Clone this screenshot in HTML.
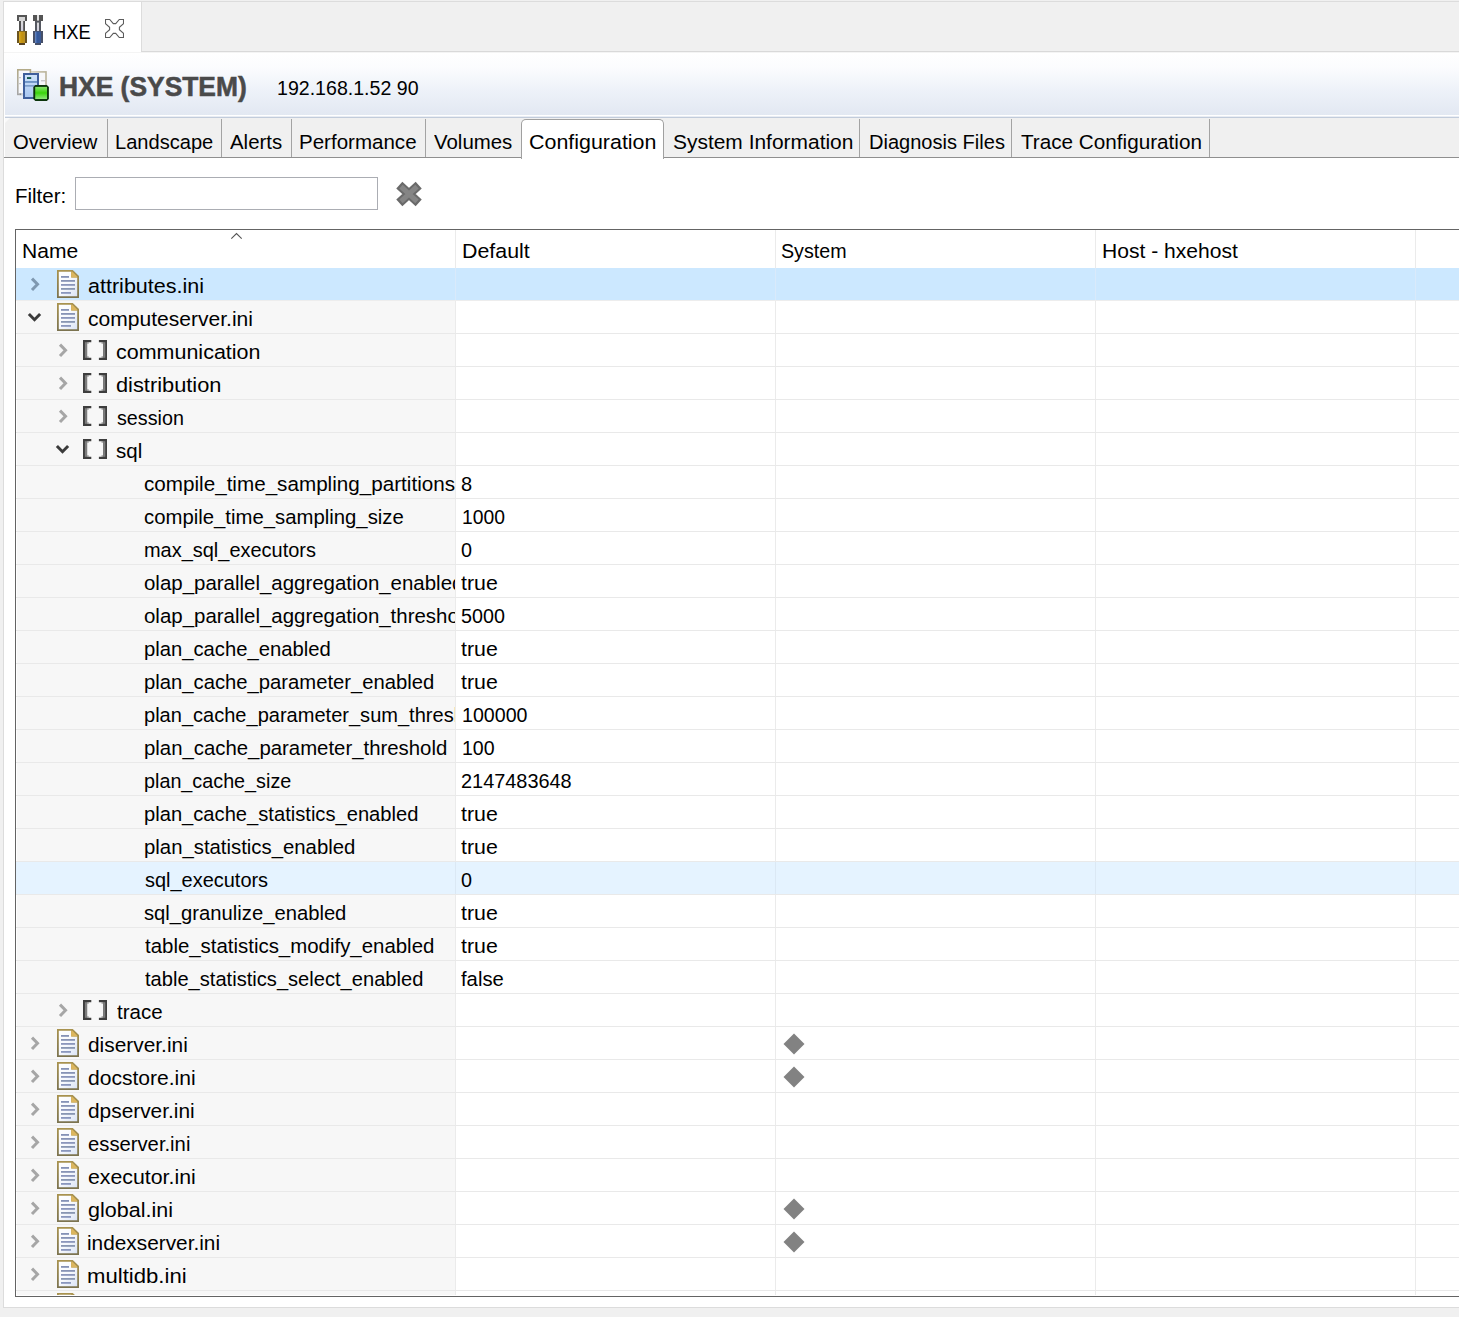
<!DOCTYPE html>
<html><head><meta charset="utf-8"><title>HXE</title>
<style>
html,body{margin:0;padding:0}
body{width:1459px;height:1317px;background:#f0f0f0;overflow:hidden;position:relative;font-family:"Liberation Sans",sans-serif}
.r{position:absolute;display:block}
.clip{overflow:hidden}
.ttl{-webkit-text-stroke:0.55px #4a4a4a}
.t{position:absolute;white-space:nowrap;line-height:1;transform-origin:0 50%;display:inline-block}
</style></head><body>
<div class="r" style="left:3px;top:1px;width:1456px;height:1px;background:#dcdcdc;"></div>
<div class="r" style="left:3px;top:1px;width:1px;height:1307px;background:#dcdcdc;"></div>
<div class="r" style="left:3px;top:1307px;width:1456px;height:1px;background:#dcdcdc;"></div>
<div class="r" style="left:4px;top:2px;width:1455px;height:1305px;background:#fff;"></div>
<div class="r" style="left:4px;top:2px;width:1455px;height:49px;background:#f0f0f0;"></div>
<div class="r" style="left:141px;top:51px;width:1318px;height:1px;background:#d9d9d9;"></div>
<div class="r" style="left:4px;top:2px;width:137px;height:50px;background:#fff;"></div>
<div class="r" style="left:141px;top:2px;width:1px;height:49px;background:#dcdcdc;"></div>
<svg class="r" style="left:17px;top:15px" width="26" height="30" viewBox="0 0 26 30">
<defs><linearGradient id="gy" x1="0" x2="1"><stop offset="0" stop-color="#d9ac2a"/><stop offset=".5" stop-color="#c4910c"/><stop offset="1" stop-color="#b8902a"/></linearGradient>
<linearGradient id="gb" x1="0" x2="1"><stop offset="0" stop-color="#6f8fc8"/><stop offset=".35" stop-color="#33599e"/><stop offset="1" stop-color="#3d5a94"/></linearGradient>
<linearGradient id="gs" x1="0" y1="0" x2="0" y2="1"><stop offset="0" stop-color="#dcdcdc"/><stop offset="1" stop-color="#d2d0e0"/></linearGradient></defs>
<rect x="0" y="0" width="10" height="6" fill="#555"/><rect x="2" y="2" width="6" height="4" fill="#d6d6d6"/>
<rect x="2" y="6" width="6" height="10" fill="#505050"/><rect x="4" y="6" width="2.2" height="10" fill="url(#gs)"/>
<rect x="0" y="16" width="10" height="12" fill="#6a5420"/><rect x="2" y="16.6" width="6" height="11.4" fill="url(#gy)"/>
<rect x="2" y="28" width="6" height="2" fill="#5a4522"/>
<rect x="16" y="0" width="10" height="6" fill="#555"/><rect x="20" y="0" width="2" height="5.6" fill="#e4e4e4"/>
<rect x="18" y="6" width="6" height="10" fill="#555860"/><rect x="20" y="7.6" width="2" height="8.4" fill="url(#gs)"/>
<rect x="16" y="16" width="10" height="12" fill="#475068"/><rect x="18" y="16.6" width="6" height="11.4" fill="url(#gb)"/>
<rect x="18" y="28" width="6" height="2" fill="#45506a"/>
</svg>
<span class="t " style="left:52.64px;top:22px;font-size:20.5px;transform:scaleX(0.8924);color:#000;">HXE</span>
<svg class="r" style="left:105px;top:19px" width="19" height="19" viewBox="0 0 19 19">
<path d="M.5.5H4.7L8.3 4.6H10.7L14.3.5H18.5V4.7L14.4 8.3V10.7L18.5 14.3V18.5H14.3L10.7 14.4H8.3L4.7 18.5H.5V14.3L4.6 10.7V8.3L.5 4.7Z" fill="#fff" stroke="#5c5c5c" stroke-width="1.1"/></svg>
<div class="r" style="left:5px;top:52px;width:1454px;height:63px;background:linear-gradient(#ffffff 0%,#fbfcfe 25%,#eef2f9 60%,#e2e8f2 100%);"></div>
<div class="r" style="left:4px;top:52px;width:1455px;height:1px;background:#f4f4f4;"></div>
<div class="r" style="left:5px;top:115px;width:1454px;height:1px;background:#ffffff;"></div>
<div class="r" style="left:5px;top:116px;width:1454px;height:1px;background:#e9edf4;"></div>
<div class="r" style="left:5px;top:117px;width:1454px;height:1px;background:#c2ccdb;"></div>
<svg class="r" style="left:17px;top:69px" width="32" height="32" viewBox="0 0 32 32">
<defs><linearGradient id="gg" x1="0" y1="0" x2="0" y2="1"><stop offset="0" stop-color="#86e36a"/><stop offset=".5" stop-color="#3ad40c"/><stop offset="1" stop-color="#8ce87a"/></linearGradient>
<linearGradient id="gsv" x1="0" y1="0" x2="0" y2="1"><stop offset="0" stop-color="#cfe4fb"/><stop offset="1" stop-color="#a9c6f0"/></linearGradient></defs>
<defs><linearGradient id="bp1" x1="0" y1="0" x2="0" y2="1"><stop offset="0" stop-color="#b3aa88"/><stop offset=".5" stop-color="#b0ac9c"/><stop offset="1" stop-color="#a6a6a6"/></linearGradient>
<linearGradient id="bp2" x1="0" y1="0" x2="1" y2="0"><stop offset="0" stop-color="#dddacb"/><stop offset=".6" stop-color="#c2bca4"/><stop offset="1" stop-color="#b9b299"/></linearGradient></defs>
<rect x="13" y="2.9" width="16" height="14" fill="#f6f7fa" stroke="url(#bp2)" stroke-width="1.6"/>
<rect x=".8" y=".8" width="12.6" height="24.6" fill="#f7f8fb" stroke="url(#bp1)" stroke-width="1.6"/>
<rect x="2" y="24.2" width="5" height="2" fill="#d9d9d9"/><rect x="2.4" y="24.4" width="1.8" height="1.6" fill="#8c8c8c"/>
<rect x="2" y="8" width="2" height="1.2" fill="#c8c8c8"/><rect x="2" y="14" width="2" height="1.2" fill="#c8c8c8"/><rect x="24" y="11" width="4" height="1.4" fill="#c8c8cc"/>
<rect x="7" y="5" width="14" height="24" fill="url(#gsv)" stroke="#3f5f9c" stroke-width="2"/>
<rect x="10" y="8.1" width="4.2" height="1.9" fill="#14584c"/>
<rect x="8" y="12" width="12" height="1.9" fill="#6f95c6"/>
<rect x="8" y="16" width="12" height="1.7" fill="#7fa0cc"/>
<path d="M18.3 16H29.9L31.9 18V29.9L29.9 31.9H18.3L16.3 29.9V18Z" fill="#0b340b"/>
<rect x="18.2" y="17.9" width="11.8" height="12.1" fill="url(#gg)"/>
</svg>
<span class="t ttl" style="left:59.48px;top:74px;font-size:27.0px;transform:scaleX(0.9778);color:#4a4a4a;font-weight:bold;">HXE (SYSTEM)</span>
<span class="t " style="left:277.43px;top:78px;font-size:20.5px;transform:scaleX(0.9551);color:#000;">192.168.1.52 90</span>
<div class="r" style="left:5px;top:118px;width:1454px;height:39px;background:#f0f0f0;"></div>
<svg class="r" style="left:5px;top:118px" width="6" height="6" viewBox="0 0 6 6"><path d="M0 0H5L0 5Z" fill="#fafafa"/></svg>
<div class="r" style="left:4px;top:157px;width:1455px;height:1px;background:#8f8f8f;"></div>
<div class="r" style="left:107px;top:119px;width:1px;height:38px;background:#a3a3a3;"></div>
<div class="r" style="left:221px;top:119px;width:1px;height:38px;background:#a3a3a3;"></div>
<div class="r" style="left:291px;top:119px;width:1px;height:38px;background:#a3a3a3;"></div>
<div class="r" style="left:425px;top:119px;width:1px;height:38px;background:#a3a3a3;"></div>
<div class="r" style="left:859px;top:119px;width:1px;height:38px;background:#a3a3a3;"></div>
<div class="r" style="left:1011px;top:119px;width:1px;height:38px;background:#a3a3a3;"></div>
<div class="r" style="left:1209px;top:119px;width:1px;height:38px;background:#a3a3a3;"></div>
<div class="r" style="left:521px;top:119px;width:141px;height:39px;background:#fff;border:1px solid #a0a0a0;border-bottom:none;border-radius:5px 5px 0 0;box-sizing:content-box"></div>
<span class="t " style="left:12.69px;top:132px;font-size:20.5px;transform:scaleX(0.9863);color:#000;">Overview</span>
<span class="t " style="left:114.79px;top:132px;font-size:20.5px;transform:scaleX(0.9797);color:#000;">Landscape</span>
<span class="t " style="left:229.90px;top:132px;font-size:20.5px;transform:scaleX(0.9950);color:#000;">Alerts</span>
<span class="t " style="left:298.56px;top:132px;font-size:20.5px;transform:scaleX(1.0017);color:#000;">Performance</span>
<span class="t " style="left:433.70px;top:132px;font-size:20.5px;transform:scaleX(0.9962);color:#000;">Volumes</span>
<span class="t " style="left:528.53px;top:132px;font-size:20.5px;transform:scaleX(1.0450);color:#000;">Configuration</span>
<span class="t " style="left:672.86px;top:132px;font-size:20.5px;transform:scaleX(1.0215);color:#000;">System Information</span>
<span class="t " style="left:868.90px;top:132px;font-size:20.5px;transform:scaleX(0.9778);color:#000;">Diagnosis Files</span>
<span class="t " style="left:1021.39px;top:132px;font-size:20.5px;transform:scaleX(1.0094);color:#000;">Trace Configuration</span>
<span class="t " style="left:14.86px;top:186px;font-size:20.5px;transform:scaleX(0.9986);color:#000;">Filter:</span>
<div class="r" style="left:75px;top:177px;width:301px;height:31px;background:#fff;border:1px solid #abadb3;box-sizing:content-box"></div>
<svg class="r" style="left:394px;top:180px" width="30" height="28" viewBox="0 0 30 28">
<path d="M5.3 5.1L24.7 22.9M24.7 5.1L5.3 22.9" stroke="#6a6a6a" stroke-width="9"/>
<path d="M7 6.7L23 21.3M23 6.7L7 21.3" stroke="#858585" stroke-width="5"/></svg>
<div class="r" style="left:15px;top:229px;width:1444px;height:1px;background:#646464;"></div>
<div class="r" style="left:15px;top:229px;width:1px;height:1068px;background:#646464;"></div>
<div class="r" style="left:15px;top:1296px;width:1444px;height:1px;background:#646464;"></div>
<div class="r" style="left:17px;top:268px;width:438px;height:1027px;background:#f7f7f7;"></div>
<span class="t " style="left:21.82px;top:241px;font-size:20.5px;transform:scaleX(1.0274);color:#000;">Name</span>
<span class="t " style="left:461.79px;top:241px;font-size:20.5px;transform:scaleX(1.0421);color:#000;">Default</span>
<span class="t " style="left:781.42px;top:241px;font-size:20.5px;transform:scaleX(0.9590);color:#000;">System</span>
<span class="t " style="left:1101.71px;top:241px;font-size:20.5px;transform:scaleX(1.0278);color:#000;">Host - hxehost</span>
<svg class="r" style="left:229px;top:231px" width="15" height="9" viewBox="0 0 15 9"><path d="M2.3 7.7L7.5 2.5L12.7 7.7" fill="none" stroke="#555" stroke-width="1.1"/></svg>
<div class="r" style="left:455px;top:230px;width:1px;height:1066px;background:rgba(0,0,0,0.08);"></div>
<div class="r" style="left:775px;top:230px;width:1px;height:1066px;background:rgba(0,0,0,0.08);"></div>
<div class="r" style="left:1095px;top:230px;width:1px;height:1066px;background:rgba(0,0,0,0.08);"></div>
<div class="r" style="left:1415px;top:230px;width:1px;height:1066px;background:rgba(0,0,0,0.08);"></div>
<div class="r" style="left:16px;top:268px;width:1443px;height:32px;background:#cce8ff;"></div>
<div class="r" style="left:455px;top:268px;width:1px;height:32px;background:rgba(255,240,240,0.25);"></div>
<div class="r" style="left:775px;top:268px;width:1px;height:32px;background:rgba(255,240,240,0.25);"></div>
<div class="r" style="left:1095px;top:268px;width:1px;height:32px;background:rgba(255,240,240,0.25);"></div>
<div class="r" style="left:1415px;top:268px;width:1px;height:32px;background:rgba(255,240,240,0.25);"></div>
<div class="r" style="left:16px;top:300px;width:1443px;height:1px;background:#ededed;"></div>
<svg class="r" style="left:28px;top:276px" width="14" height="17" viewBox="0 0 14 17"><path d="M4 2.6L9.5 8.3L4 14" fill="none" stroke="#7f98b0" stroke-width="3"/></svg>
<svg class="r" style="left:57px;top:270px" width="22" height="28" viewBox="0 0 22 28">
<defs><linearGradient id="fb0" x1="0" y1="0" x2="0" y2="1"><stop offset="0" stop-color="#a9934f"/><stop offset="1" stop-color="#7b7350"/></linearGradient>
<linearGradient id="fp0" x1="0" y1="0" x2="1" y2="1"><stop offset="0" stop-color="#ffffff"/><stop offset=".5" stop-color="#f7f9fd"/><stop offset="1" stop-color="#dbe4f5"/></linearGradient></defs>
<path d="M0 0H15.8L22 6V28H0Z" fill="url(#fb0)"/>
<path d="M1.8 1.8H14.2V7.6H20.2V26.2H1.8Z" fill="url(#fp0)"/>
<path d="M14.2 1.8H15.4L20.2 6.4V7.6H14.2Z" fill="#dcb65e"/>
<rect x="4" y="6" width="8" height="1.8" fill="#8592b6"/><rect x="4" y="10" width="14" height="1.8" fill="#8793b5"/>
<rect x="4" y="14" width="14" height="1.8" fill="#8b96bb"/><rect x="4" y="18" width="14" height="1.8" fill="#8896b2"/>
<rect x="4" y="22" width="10" height="1.8" fill="#8a97bd"/></svg>
<span class="t " style="left:87.74px;top:276px;font-size:20.5px;transform:scaleX(1.0504);color:#000;">attributes.ini</span>
<div class="r" style="left:16px;top:333px;width:1443px;height:1px;background:#e9e9e9;"></div>
<svg class="r" style="left:26px;top:310px" width="17" height="14" viewBox="0 0 17 14"><path d="M2.9 4L8.5 9.7L14.1 4" fill="none" stroke="#3b3b3b" stroke-width="3"/></svg>
<svg class="r" style="left:57px;top:303px" width="22" height="28" viewBox="0 0 22 28">
<defs><linearGradient id="fb1" x1="0" y1="0" x2="0" y2="1"><stop offset="0" stop-color="#a9934f"/><stop offset="1" stop-color="#7b7350"/></linearGradient>
<linearGradient id="fp1" x1="0" y1="0" x2="1" y2="1"><stop offset="0" stop-color="#ffffff"/><stop offset=".5" stop-color="#f7f9fd"/><stop offset="1" stop-color="#dbe4f5"/></linearGradient></defs>
<path d="M0 0H15.8L22 6V28H0Z" fill="url(#fb1)"/>
<path d="M1.8 1.8H14.2V7.6H20.2V26.2H1.8Z" fill="url(#fp1)"/>
<path d="M14.2 1.8H15.4L20.2 6.4V7.6H14.2Z" fill="#dcb65e"/>
<rect x="4" y="6" width="8" height="1.8" fill="#8592b6"/><rect x="4" y="10" width="14" height="1.8" fill="#8793b5"/>
<rect x="4" y="14" width="14" height="1.8" fill="#8b96bb"/><rect x="4" y="18" width="14" height="1.8" fill="#8896b2"/>
<rect x="4" y="22" width="10" height="1.8" fill="#8a97bd"/></svg>
<span class="t " style="left:87.76px;top:309px;font-size:20.5px;transform:scaleX(1.0267);color:#000;">computeserver.ini</span>
<div class="r" style="left:16px;top:366px;width:1443px;height:1px;background:#e9e9e9;"></div>
<svg class="r" style="left:56px;top:342px" width="14" height="17" viewBox="0 0 14 17"><path d="M4 2.6L9.5 8.3L4 14" fill="none" stroke="#a6a6a6" stroke-width="3"/></svg>
<svg class="r" style="left:82.8px;top:340px" width="24.2" height="20" viewBox="0 0 24.2 20">
<path d="M0 0H8.3V2.2H4.1V17.8H8.3V20H0Z" fill="#3e3e3e"/><rect x="1.9" y="2.2" width="2.2" height="15.6" fill="#7d7d7d"/><rect x="4.1" y="2.2" width="1.6" height="1.4" fill="#8a8a8a"/><rect x="4.1" y="16.4" width="1.6" height="1.4" fill="#8a8a8a"/>
<path d="M24.2 0H15.9V2.2H20.1V17.8H15.9V20H24.2Z" fill="#3e3e3e"/><rect x="20.1" y="2.2" width="2.2" height="15.6" fill="#7d7d7d"/><rect x="18.5" y="2.2" width="1.6" height="1.4" fill="#8a8a8a"/><rect x="18.5" y="16.4" width="1.6" height="1.4" fill="#8a8a8a"/></svg>
<span class="t " style="left:116.14px;top:342px;font-size:20.5px;transform:scaleX(1.0478);color:#000;">communication</span>
<div class="r" style="left:16px;top:399px;width:1443px;height:1px;background:#e9e9e9;"></div>
<svg class="r" style="left:56px;top:375px" width="14" height="17" viewBox="0 0 14 17"><path d="M4 2.6L9.5 8.3L4 14" fill="none" stroke="#a6a6a6" stroke-width="3"/></svg>
<svg class="r" style="left:82.8px;top:373px" width="24.2" height="20" viewBox="0 0 24.2 20">
<path d="M0 0H8.3V2.2H4.1V17.8H8.3V20H0Z" fill="#3e3e3e"/><rect x="1.9" y="2.2" width="2.2" height="15.6" fill="#7d7d7d"/><rect x="4.1" y="2.2" width="1.6" height="1.4" fill="#8a8a8a"/><rect x="4.1" y="16.4" width="1.6" height="1.4" fill="#8a8a8a"/>
<path d="M24.2 0H15.9V2.2H20.1V17.8H15.9V20H24.2Z" fill="#3e3e3e"/><rect x="20.1" y="2.2" width="2.2" height="15.6" fill="#7d7d7d"/><rect x="18.5" y="2.2" width="1.6" height="1.4" fill="#8a8a8a"/><rect x="18.5" y="16.4" width="1.6" height="1.4" fill="#8a8a8a"/></svg>
<span class="t " style="left:116.13px;top:375px;font-size:20.5px;transform:scaleX(1.0632);color:#000;">distribution</span>
<div class="r" style="left:16px;top:432px;width:1443px;height:1px;background:#e9e9e9;"></div>
<svg class="r" style="left:56px;top:408px" width="14" height="17" viewBox="0 0 14 17"><path d="M4 2.6L9.5 8.3L4 14" fill="none" stroke="#a6a6a6" stroke-width="3"/></svg>
<svg class="r" style="left:82.8px;top:406px" width="24.2" height="20" viewBox="0 0 24.2 20">
<path d="M0 0H8.3V2.2H4.1V17.8H8.3V20H0Z" fill="#3e3e3e"/><rect x="1.9" y="2.2" width="2.2" height="15.6" fill="#7d7d7d"/><rect x="4.1" y="2.2" width="1.6" height="1.4" fill="#8a8a8a"/><rect x="4.1" y="16.4" width="1.6" height="1.4" fill="#8a8a8a"/>
<path d="M24.2 0H15.9V2.2H20.1V17.8H15.9V20H24.2Z" fill="#3e3e3e"/><rect x="20.1" y="2.2" width="2.2" height="15.6" fill="#7d7d7d"/><rect x="18.5" y="2.2" width="1.6" height="1.4" fill="#8a8a8a"/><rect x="18.5" y="16.4" width="1.6" height="1.4" fill="#8a8a8a"/></svg>
<span class="t " style="left:116.51px;top:408px;font-size:20.5px;transform:scaleX(0.9623);color:#000;">session</span>
<div class="r" style="left:16px;top:465px;width:1443px;height:1px;background:#e9e9e9;"></div>
<svg class="r" style="left:54px;top:442px" width="17" height="14" viewBox="0 0 17 14"><path d="M2.9 4L8.5 9.7L14.1 4" fill="none" stroke="#3b3b3b" stroke-width="3"/></svg>
<svg class="r" style="left:82.8px;top:439px" width="24.2" height="20" viewBox="0 0 24.2 20">
<path d="M0 0H8.3V2.2H4.1V17.8H8.3V20H0Z" fill="#3e3e3e"/><rect x="1.9" y="2.2" width="2.2" height="15.6" fill="#7d7d7d"/><rect x="4.1" y="2.2" width="1.6" height="1.4" fill="#8a8a8a"/><rect x="4.1" y="16.4" width="1.6" height="1.4" fill="#8a8a8a"/>
<path d="M24.2 0H15.9V2.2H20.1V17.8H15.9V20H24.2Z" fill="#3e3e3e"/><rect x="20.1" y="2.2" width="2.2" height="15.6" fill="#7d7d7d"/><rect x="18.5" y="2.2" width="1.6" height="1.4" fill="#8a8a8a"/><rect x="18.5" y="16.4" width="1.6" height="1.4" fill="#8a8a8a"/></svg>
<span class="t " style="left:116.49px;top:441px;font-size:20.5px;transform:scaleX(1.0003);color:#000;">sql</span>
<div class="r" style="left:16px;top:498px;width:1443px;height:1px;background:#e9e9e9;"></div>
<div class="r clip" style="left:16px;top:466px;width:439px;height:32px"><span class="t " style="left:128.17px;top:8px;font-size:20.5px;transform:scaleX(1.0072);color:#000;">compile_time_sampling_partitions</span></div>
<span class="t " style="left:460.90px;top:474px;font-size:20.5px;transform:scaleX(0.9756);color:#000;">8</span>
<div class="r" style="left:16px;top:531px;width:1443px;height:1px;background:#e9e9e9;"></div>
<span class="t " style="left:144.19px;top:507px;font-size:20.5px;transform:scaleX(0.9914);color:#000;">compile_time_sampling_size</span>
<span class="t " style="left:461.85px;top:507px;font-size:20.5px;transform:scaleX(0.9410);color:#000;">1000</span>
<div class="r" style="left:16px;top:564px;width:1443px;height:1px;background:#e9e9e9;"></div>
<span class="t " style="left:143.70px;top:540px;font-size:20.5px;transform:scaleX(0.9733);color:#000;">max_sql_executors</span>
<span class="t " style="left:460.91px;top:540px;font-size:20.5px;transform:scaleX(0.9654);color:#000;">0</span>
<div class="r" style="left:16px;top:597px;width:1443px;height:1px;background:#e9e9e9;"></div>
<div class="r clip" style="left:16px;top:565px;width:439px;height:32px"><span class="t " style="left:128.18px;top:8px;font-size:20.5px;transform:scaleX(0.9971);color:#000;">olap_parallel_aggregation_enabled</span></div>
<span class="t " style="left:461.38px;top:573px;font-size:20.5px;transform:scaleX(1.0401);color:#000;">true</span>
<div class="r" style="left:16px;top:630px;width:1443px;height:1px;background:#e9e9e9;"></div>
<div class="r clip" style="left:16px;top:598px;width:439px;height:32px"><span class="t " style="left:128.18px;top:8px;font-size:20.5px;transform:scaleX(0.9971);color:#000;">olap_parallel_aggregation_threshold</span></div>
<span class="t " style="left:460.91px;top:606px;font-size:20.5px;transform:scaleX(0.9620);color:#000;">5000</span>
<div class="r" style="left:16px;top:663px;width:1443px;height:1px;background:#e9e9e9;"></div>
<span class="t " style="left:143.69px;top:639px;font-size:20.5px;transform:scaleX(0.9869);color:#000;">plan_cache_enabled</span>
<span class="t " style="left:461.38px;top:639px;font-size:20.5px;transform:scaleX(1.0401);color:#000;">true</span>
<div class="r" style="left:16px;top:696px;width:1443px;height:1px;background:#e9e9e9;"></div>
<span class="t " style="left:143.68px;top:672px;font-size:20.5px;transform:scaleX(0.9873);color:#000;">plan_cache_parameter_enabled</span>
<span class="t " style="left:461.38px;top:672px;font-size:20.5px;transform:scaleX(1.0401);color:#000;">true</span>
<div class="r" style="left:16px;top:729px;width:1443px;height:1px;background:#e9e9e9;"></div>
<div class="r clip" style="left:16px;top:697px;width:439px;height:32px"><span class="t " style="left:127.70px;top:8px;font-size:20.5px;transform:scaleX(0.9775);color:#000;">plan_cache_parameter_sum_threshold</span></div>
<span class="t " style="left:461.83px;top:705px;font-size:20.5px;transform:scaleX(0.9575);color:#000;">100000</span>
<div class="r" style="left:16px;top:762px;width:1443px;height:1px;background:#e9e9e9;"></div>
<span class="t " style="left:143.68px;top:738px;font-size:20.5px;transform:scaleX(0.9928);color:#000;">plan_cache_parameter_threshold</span>
<span class="t " style="left:461.83px;top:738px;font-size:20.5px;transform:scaleX(0.9537);color:#000;">100</span>
<div class="r" style="left:16px;top:795px;width:1443px;height:1px;background:#e9e9e9;"></div>
<span class="t " style="left:143.72px;top:771px;font-size:20.5px;transform:scaleX(0.9643);color:#000;">plan_cache_size</span>
<span class="t " style="left:460.71px;top:771px;font-size:20.5px;transform:scaleX(0.9703);color:#000;">2147483648</span>
<div class="r" style="left:16px;top:828px;width:1443px;height:1px;background:#e9e9e9;"></div>
<span class="t " style="left:143.69px;top:804px;font-size:20.5px;transform:scaleX(0.9828);color:#000;">plan_cache_statistics_enabled</span>
<span class="t " style="left:461.38px;top:804px;font-size:20.5px;transform:scaleX(1.0401);color:#000;">true</span>
<div class="r" style="left:16px;top:861px;width:1443px;height:1px;background:#e9e9e9;"></div>
<span class="t " style="left:143.68px;top:837px;font-size:20.5px;transform:scaleX(0.9918);color:#000;">plan_statistics_enabled</span>
<span class="t " style="left:461.38px;top:837px;font-size:20.5px;transform:scaleX(1.0401);color:#000;">true</span>
<div class="r" style="left:16px;top:862px;width:1443px;height:32px;background:#e5f3ff;"></div>
<div class="r" style="left:455px;top:862px;width:1px;height:32px;background:rgba(0,0,0,0.045);"></div>
<div class="r" style="left:775px;top:862px;width:1px;height:32px;background:rgba(0,0,0,0.045);"></div>
<div class="r" style="left:1095px;top:862px;width:1px;height:32px;background:rgba(0,0,0,0.045);"></div>
<div class="r" style="left:1415px;top:862px;width:1px;height:32px;background:rgba(0,0,0,0.045);"></div>
<div class="r" style="left:16px;top:894px;width:1443px;height:1px;background:#e9e9e9;"></div>
<span class="t " style="left:144.50px;top:870px;font-size:20.5px;transform:scaleX(0.9732);color:#000;">sql_executors</span>
<span class="t " style="left:460.91px;top:870px;font-size:20.5px;transform:scaleX(0.9654);color:#000;">0</span>
<div class="r" style="left:16px;top:927px;width:1443px;height:1px;background:#e9e9e9;"></div>
<span class="t " style="left:144.49px;top:903px;font-size:20.5px;transform:scaleX(0.9864);color:#000;">sql_granulize_enabled</span>
<span class="t " style="left:461.38px;top:903px;font-size:20.5px;transform:scaleX(1.0401);color:#000;">true</span>
<div class="r" style="left:16px;top:960px;width:1443px;height:1px;background:#e9e9e9;"></div>
<span class="t " style="left:144.69px;top:936px;font-size:20.5px;transform:scaleX(0.9957);color:#000;">table_statistics_modify_enabled</span>
<span class="t " style="left:461.38px;top:936px;font-size:20.5px;transform:scaleX(1.0401);color:#000;">true</span>
<div class="r" style="left:16px;top:993px;width:1443px;height:1px;background:#e9e9e9;"></div>
<span class="t " style="left:144.70px;top:969px;font-size:20.5px;transform:scaleX(0.9809);color:#000;">table_statistics_select_enabled</span>
<span class="t " style="left:461.40px;top:969px;font-size:20.5px;transform:scaleX(0.9875);color:#000;">false</span>
<div class="r" style="left:16px;top:1026px;width:1443px;height:1px;background:#e9e9e9;"></div>
<svg class="r" style="left:56px;top:1002px" width="14" height="17" viewBox="0 0 14 17"><path d="M4 2.6L9.5 8.3L4 14" fill="none" stroke="#a6a6a6" stroke-width="3"/></svg>
<svg class="r" style="left:82.8px;top:1000px" width="24.2" height="20" viewBox="0 0 24.2 20">
<path d="M0 0H8.3V2.2H4.1V17.8H8.3V20H0Z" fill="#3e3e3e"/><rect x="1.9" y="2.2" width="2.2" height="15.6" fill="#7d7d7d"/><rect x="4.1" y="2.2" width="1.6" height="1.4" fill="#8a8a8a"/><rect x="4.1" y="16.4" width="1.6" height="1.4" fill="#8a8a8a"/>
<path d="M24.2 0H15.9V2.2H20.1V17.8H15.9V20H24.2Z" fill="#3e3e3e"/><rect x="20.1" y="2.2" width="2.2" height="15.6" fill="#7d7d7d"/><rect x="18.5" y="2.2" width="1.6" height="1.4" fill="#8a8a8a"/><rect x="18.5" y="16.4" width="1.6" height="1.4" fill="#8a8a8a"/></svg>
<span class="t " style="left:116.69px;top:1002px;font-size:20.5px;transform:scaleX(1.0004);color:#000;">trace</span>
<div class="r" style="left:16px;top:1059px;width:1443px;height:1px;background:#e9e9e9;"></div>
<svg class="r" style="left:28px;top:1035px" width="14" height="17" viewBox="0 0 14 17"><path d="M4 2.6L9.5 8.3L4 14" fill="none" stroke="#a6a6a6" stroke-width="3"/></svg>
<svg class="r" style="left:57px;top:1029px" width="22" height="28" viewBox="0 0 22 28">
<defs><linearGradient id="fb23" x1="0" y1="0" x2="0" y2="1"><stop offset="0" stop-color="#a9934f"/><stop offset="1" stop-color="#7b7350"/></linearGradient>
<linearGradient id="fp23" x1="0" y1="0" x2="1" y2="1"><stop offset="0" stop-color="#ffffff"/><stop offset=".5" stop-color="#f7f9fd"/><stop offset="1" stop-color="#dbe4f5"/></linearGradient></defs>
<path d="M0 0H15.8L22 6V28H0Z" fill="url(#fb23)"/>
<path d="M1.8 1.8H14.2V7.6H20.2V26.2H1.8Z" fill="url(#fp23)"/>
<path d="M14.2 1.8H15.4L20.2 6.4V7.6H14.2Z" fill="#dcb65e"/>
<rect x="4" y="6" width="8" height="1.8" fill="#8592b6"/><rect x="4" y="10" width="14" height="1.8" fill="#8793b5"/>
<rect x="4" y="14" width="14" height="1.8" fill="#8b96bb"/><rect x="4" y="18" width="14" height="1.8" fill="#8896b2"/>
<rect x="4" y="22" width="10" height="1.8" fill="#8a97bd"/></svg>
<span class="t " style="left:87.76px;top:1035px;font-size:20.5px;transform:scaleX(1.0184);color:#000;">diserver.ini</span>
<svg class="r" style="left:783px;top:1033px" width="22" height="22" viewBox="0 0 22 22"><path d="M11 .5L21.5 11L11 21.5L.5 11Z" fill="#828282"/></svg>
<div class="r" style="left:16px;top:1092px;width:1443px;height:1px;background:#e9e9e9;"></div>
<svg class="r" style="left:28px;top:1068px" width="14" height="17" viewBox="0 0 14 17"><path d="M4 2.6L9.5 8.3L4 14" fill="none" stroke="#a6a6a6" stroke-width="3"/></svg>
<svg class="r" style="left:57px;top:1062px" width="22" height="28" viewBox="0 0 22 28">
<defs><linearGradient id="fb24" x1="0" y1="0" x2="0" y2="1"><stop offset="0" stop-color="#a9934f"/><stop offset="1" stop-color="#7b7350"/></linearGradient>
<linearGradient id="fp24" x1="0" y1="0" x2="1" y2="1"><stop offset="0" stop-color="#ffffff"/><stop offset=".5" stop-color="#f7f9fd"/><stop offset="1" stop-color="#dbe4f5"/></linearGradient></defs>
<path d="M0 0H15.8L22 6V28H0Z" fill="url(#fb24)"/>
<path d="M1.8 1.8H14.2V7.6H20.2V26.2H1.8Z" fill="url(#fp24)"/>
<path d="M14.2 1.8H15.4L20.2 6.4V7.6H14.2Z" fill="#dcb65e"/>
<rect x="4" y="6" width="8" height="1.8" fill="#8592b6"/><rect x="4" y="10" width="14" height="1.8" fill="#8793b5"/>
<rect x="4" y="14" width="14" height="1.8" fill="#8b96bb"/><rect x="4" y="18" width="14" height="1.8" fill="#8896b2"/>
<rect x="4" y="22" width="10" height="1.8" fill="#8a97bd"/></svg>
<span class="t " style="left:87.76px;top:1068px;font-size:20.5px;transform:scaleX(1.0273);color:#000;">docstore.ini</span>
<svg class="r" style="left:783px;top:1066px" width="22" height="22" viewBox="0 0 22 22"><path d="M11 .5L21.5 11L11 21.5L.5 11Z" fill="#828282"/></svg>
<div class="r" style="left:16px;top:1125px;width:1443px;height:1px;background:#e9e9e9;"></div>
<svg class="r" style="left:28px;top:1101px" width="14" height="17" viewBox="0 0 14 17"><path d="M4 2.6L9.5 8.3L4 14" fill="none" stroke="#a6a6a6" stroke-width="3"/></svg>
<svg class="r" style="left:57px;top:1095px" width="22" height="28" viewBox="0 0 22 28">
<defs><linearGradient id="fb25" x1="0" y1="0" x2="0" y2="1"><stop offset="0" stop-color="#a9934f"/><stop offset="1" stop-color="#7b7350"/></linearGradient>
<linearGradient id="fp25" x1="0" y1="0" x2="1" y2="1"><stop offset="0" stop-color="#ffffff"/><stop offset=".5" stop-color="#f7f9fd"/><stop offset="1" stop-color="#dbe4f5"/></linearGradient></defs>
<path d="M0 0H15.8L22 6V28H0Z" fill="url(#fb25)"/>
<path d="M1.8 1.8H14.2V7.6H20.2V26.2H1.8Z" fill="url(#fp25)"/>
<path d="M14.2 1.8H15.4L20.2 6.4V7.6H14.2Z" fill="#dcb65e"/>
<rect x="4" y="6" width="8" height="1.8" fill="#8592b6"/><rect x="4" y="10" width="14" height="1.8" fill="#8793b5"/>
<rect x="4" y="14" width="14" height="1.8" fill="#8b96bb"/><rect x="4" y="18" width="14" height="1.8" fill="#8896b2"/>
<rect x="4" y="22" width="10" height="1.8" fill="#8a97bd"/></svg>
<span class="t " style="left:87.77px;top:1101px;font-size:20.5px;transform:scaleX(1.0175);color:#000;">dpserver.ini</span>
<div class="r" style="left:16px;top:1158px;width:1443px;height:1px;background:#e9e9e9;"></div>
<svg class="r" style="left:28px;top:1134px" width="14" height="17" viewBox="0 0 14 17"><path d="M4 2.6L9.5 8.3L4 14" fill="none" stroke="#a6a6a6" stroke-width="3"/></svg>
<svg class="r" style="left:57px;top:1128px" width="22" height="28" viewBox="0 0 22 28">
<defs><linearGradient id="fb26" x1="0" y1="0" x2="0" y2="1"><stop offset="0" stop-color="#a9934f"/><stop offset="1" stop-color="#7b7350"/></linearGradient>
<linearGradient id="fp26" x1="0" y1="0" x2="1" y2="1"><stop offset="0" stop-color="#ffffff"/><stop offset=".5" stop-color="#f7f9fd"/><stop offset="1" stop-color="#dbe4f5"/></linearGradient></defs>
<path d="M0 0H15.8L22 6V28H0Z" fill="url(#fb26)"/>
<path d="M1.8 1.8H14.2V7.6H20.2V26.2H1.8Z" fill="url(#fp26)"/>
<path d="M14.2 1.8H15.4L20.2 6.4V7.6H14.2Z" fill="#dcb65e"/>
<rect x="4" y="6" width="8" height="1.8" fill="#8592b6"/><rect x="4" y="10" width="14" height="1.8" fill="#8793b5"/>
<rect x="4" y="14" width="14" height="1.8" fill="#8b96bb"/><rect x="4" y="18" width="14" height="1.8" fill="#8896b2"/>
<rect x="4" y="22" width="10" height="1.8" fill="#8a97bd"/></svg>
<span class="t " style="left:87.79px;top:1134px;font-size:20.5px;transform:scaleX(0.9874);color:#000;">esserver.ini</span>
<div class="r" style="left:16px;top:1191px;width:1443px;height:1px;background:#e9e9e9;"></div>
<svg class="r" style="left:28px;top:1167px" width="14" height="17" viewBox="0 0 14 17"><path d="M4 2.6L9.5 8.3L4 14" fill="none" stroke="#a6a6a6" stroke-width="3"/></svg>
<svg class="r" style="left:57px;top:1161px" width="22" height="28" viewBox="0 0 22 28">
<defs><linearGradient id="fb27" x1="0" y1="0" x2="0" y2="1"><stop offset="0" stop-color="#a9934f"/><stop offset="1" stop-color="#7b7350"/></linearGradient>
<linearGradient id="fp27" x1="0" y1="0" x2="1" y2="1"><stop offset="0" stop-color="#ffffff"/><stop offset=".5" stop-color="#f7f9fd"/><stop offset="1" stop-color="#dbe4f5"/></linearGradient></defs>
<path d="M0 0H15.8L22 6V28H0Z" fill="url(#fb27)"/>
<path d="M1.8 1.8H14.2V7.6H20.2V26.2H1.8Z" fill="url(#fp27)"/>
<path d="M14.2 1.8H15.4L20.2 6.4V7.6H14.2Z" fill="#dcb65e"/>
<rect x="4" y="6" width="8" height="1.8" fill="#8592b6"/><rect x="4" y="10" width="14" height="1.8" fill="#8793b5"/>
<rect x="4" y="14" width="14" height="1.8" fill="#8b96bb"/><rect x="4" y="18" width="14" height="1.8" fill="#8896b2"/>
<rect x="4" y="22" width="10" height="1.8" fill="#8a97bd"/></svg>
<span class="t " style="left:87.75px;top:1167px;font-size:20.5px;transform:scaleX(1.0387);color:#000;">executor.ini</span>
<div class="r" style="left:16px;top:1224px;width:1443px;height:1px;background:#e9e9e9;"></div>
<svg class="r" style="left:28px;top:1200px" width="14" height="17" viewBox="0 0 14 17"><path d="M4 2.6L9.5 8.3L4 14" fill="none" stroke="#a6a6a6" stroke-width="3"/></svg>
<svg class="r" style="left:57px;top:1194px" width="22" height="28" viewBox="0 0 22 28">
<defs><linearGradient id="fb28" x1="0" y1="0" x2="0" y2="1"><stop offset="0" stop-color="#a9934f"/><stop offset="1" stop-color="#7b7350"/></linearGradient>
<linearGradient id="fp28" x1="0" y1="0" x2="1" y2="1"><stop offset="0" stop-color="#ffffff"/><stop offset=".5" stop-color="#f7f9fd"/><stop offset="1" stop-color="#dbe4f5"/></linearGradient></defs>
<path d="M0 0H15.8L22 6V28H0Z" fill="url(#fb28)"/>
<path d="M1.8 1.8H14.2V7.6H20.2V26.2H1.8Z" fill="url(#fp28)"/>
<path d="M14.2 1.8H15.4L20.2 6.4V7.6H14.2Z" fill="#dcb65e"/>
<rect x="4" y="6" width="8" height="1.8" fill="#8592b6"/><rect x="4" y="10" width="14" height="1.8" fill="#8793b5"/>
<rect x="4" y="14" width="14" height="1.8" fill="#8b96bb"/><rect x="4" y="18" width="14" height="1.8" fill="#8896b2"/>
<rect x="4" y="22" width="10" height="1.8" fill="#8a97bd"/></svg>
<span class="t " style="left:87.74px;top:1200px;font-size:20.5px;transform:scaleX(1.0493);color:#000;">global.ini</span>
<svg class="r" style="left:783px;top:1198px" width="22" height="22" viewBox="0 0 22 22"><path d="M11 .5L21.5 11L11 21.5L.5 11Z" fill="#828282"/></svg>
<div class="r" style="left:16px;top:1257px;width:1443px;height:1px;background:#e9e9e9;"></div>
<svg class="r" style="left:28px;top:1233px" width="14" height="17" viewBox="0 0 14 17"><path d="M4 2.6L9.5 8.3L4 14" fill="none" stroke="#a6a6a6" stroke-width="3"/></svg>
<svg class="r" style="left:57px;top:1227px" width="22" height="28" viewBox="0 0 22 28">
<defs><linearGradient id="fb29" x1="0" y1="0" x2="0" y2="1"><stop offset="0" stop-color="#a9934f"/><stop offset="1" stop-color="#7b7350"/></linearGradient>
<linearGradient id="fp29" x1="0" y1="0" x2="1" y2="1"><stop offset="0" stop-color="#ffffff"/><stop offset=".5" stop-color="#f7f9fd"/><stop offset="1" stop-color="#dbe4f5"/></linearGradient></defs>
<path d="M0 0H15.8L22 6V28H0Z" fill="url(#fb29)"/>
<path d="M1.8 1.8H14.2V7.6H20.2V26.2H1.8Z" fill="url(#fp29)"/>
<path d="M14.2 1.8H15.4L20.2 6.4V7.6H14.2Z" fill="#dcb65e"/>
<rect x="4" y="6" width="8" height="1.8" fill="#8592b6"/><rect x="4" y="10" width="14" height="1.8" fill="#8793b5"/>
<rect x="4" y="14" width="14" height="1.8" fill="#8b96bb"/><rect x="4" y="18" width="14" height="1.8" fill="#8896b2"/>
<rect x="4" y="22" width="10" height="1.8" fill="#8a97bd"/></svg>
<span class="t " style="left:87.25px;top:1233px;font-size:20.5px;transform:scaleX(1.0154);color:#000;">indexserver.ini</span>
<svg class="r" style="left:783px;top:1231px" width="22" height="22" viewBox="0 0 22 22"><path d="M11 .5L21.5 11L11 21.5L.5 11Z" fill="#828282"/></svg>
<div class="r" style="left:16px;top:1290px;width:1443px;height:1px;background:#e9e9e9;"></div>
<svg class="r" style="left:28px;top:1266px" width="14" height="17" viewBox="0 0 14 17"><path d="M4 2.6L9.5 8.3L4 14" fill="none" stroke="#a6a6a6" stroke-width="3"/></svg>
<svg class="r" style="left:57px;top:1260px" width="22" height="28" viewBox="0 0 22 28">
<defs><linearGradient id="fb30" x1="0" y1="0" x2="0" y2="1"><stop offset="0" stop-color="#a9934f"/><stop offset="1" stop-color="#7b7350"/></linearGradient>
<linearGradient id="fp30" x1="0" y1="0" x2="1" y2="1"><stop offset="0" stop-color="#ffffff"/><stop offset=".5" stop-color="#f7f9fd"/><stop offset="1" stop-color="#dbe4f5"/></linearGradient></defs>
<path d="M0 0H15.8L22 6V28H0Z" fill="url(#fb30)"/>
<path d="M1.8 1.8H14.2V7.6H20.2V26.2H1.8Z" fill="url(#fp30)"/>
<path d="M14.2 1.8H15.4L20.2 6.4V7.6H14.2Z" fill="#dcb65e"/>
<rect x="4" y="6" width="8" height="1.8" fill="#8592b6"/><rect x="4" y="10" width="14" height="1.8" fill="#8793b5"/>
<rect x="4" y="14" width="14" height="1.8" fill="#8b96bb"/><rect x="4" y="18" width="14" height="1.8" fill="#8896b2"/>
<rect x="4" y="22" width="10" height="1.8" fill="#8a97bd"/></svg>
<span class="t " style="left:87.16px;top:1266px;font-size:20.5px;transform:scaleX(1.0794);color:#000;">multidb.ini</span>
<div class="r clip" style="left:16px;top:1291px;width:439px;height:4px"><svg class="r" style="left:41px;top:2px" width="22" height="28" viewBox="0 0 22 28">
<defs><linearGradient id="fb99" x1="0" y1="0" x2="0" y2="1"><stop offset="0" stop-color="#a9934f"/><stop offset="1" stop-color="#7b7350"/></linearGradient>
<linearGradient id="fp99" x1="0" y1="0" x2="1" y2="1"><stop offset="0" stop-color="#ffffff"/><stop offset=".5" stop-color="#f7f9fd"/><stop offset="1" stop-color="#dbe4f5"/></linearGradient></defs>
<path d="M0 0H15.8L22 6V28H0Z" fill="url(#fb99)"/>
<path d="M1.8 1.8H14.2V7.6H20.2V26.2H1.8Z" fill="url(#fp99)"/>
<path d="M14.2 1.8H15.4L20.2 6.4V7.6H14.2Z" fill="#dcb65e"/>
<rect x="4" y="6" width="8" height="1.8" fill="#8592b6"/><rect x="4" y="10" width="14" height="1.8" fill="#8793b5"/>
<rect x="4" y="14" width="14" height="1.8" fill="#8b96bb"/><rect x="4" y="18" width="14" height="1.8" fill="#8896b2"/>
<rect x="4" y="22" width="10" height="1.8" fill="#8a97bd"/></svg></div>
<div class="r" style="left:16px;top:1295px;width:1443px;height:1px;background:#fff;"></div>
</body></html>
